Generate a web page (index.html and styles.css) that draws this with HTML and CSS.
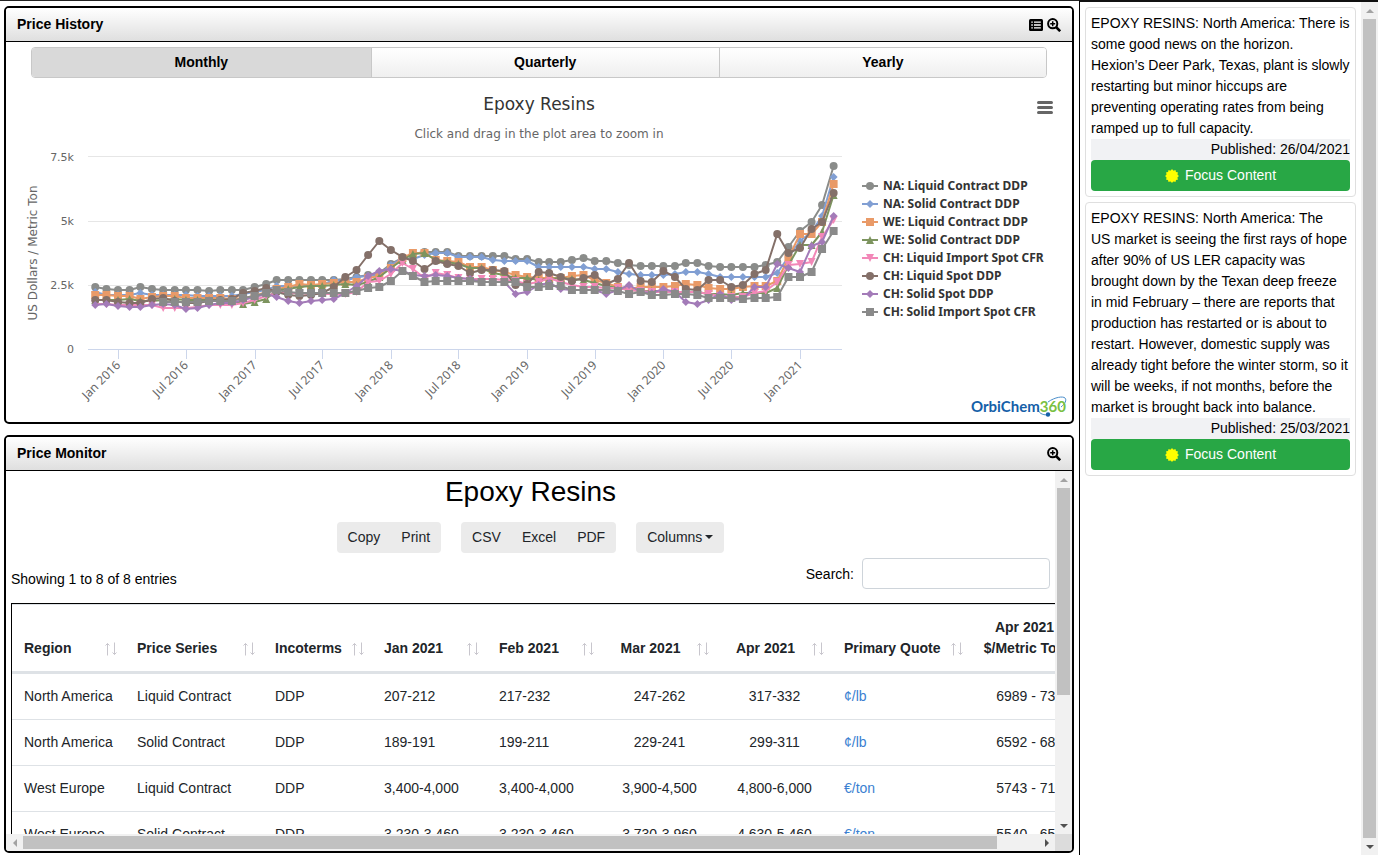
FILE: index.html
```html
<!DOCTYPE html>
<html lang="en">
<head>
<meta charset="utf-8">
<title>Epoxy Resins</title>
<link rel="stylesheet" href="styles.css">
</head>
<body>
<svg class="sprite" aria-hidden="true">
  <symbol id="i-zoom" viewBox="0 0 14 14"><circle cx="5.7" cy="5.7" r="4.6" fill="none" stroke="#000" stroke-width="2"/><path d="M9 9l4.2 4.2" stroke="#000" stroke-width="2.6"/><path d="M5.7 3.2v5M3.2 5.7h5" stroke="#000" stroke-width="1.5"/></symbol>
  <symbol id="i-list" viewBox="0 0 14 14"><rect y="1" width="14" height="12" rx="1.5"/><path d="M2.3 4.2h1.5M2.3 7h1.5M2.3 9.8h1.5M5 4.2h6.8M5 7h6.8M5 9.8h6.8" stroke="#fff" stroke-width="1.3"/></symbol>
  <symbol id="i-sort" viewBox="0 0 16 14"><path d="M4.500 13.500V1.500M2.500 3.500l2-2 2 2M11.500 .5v12M9.500 10.500l2 2 2-2" fill="none" stroke="#c8c6cd" stroke-width="1"/></symbol>
  <symbol id="i-burst" viewBox="-7 -7 14 14"><path fill="#ff0" d="M0-7 1.400-5.200 3.500-6.100 3.900-3.900 6.100-3.500 5.200-1.400 7 0 5.200 1.400 6.100 3.500 3.900 3.900 3.500 6.100 1.400 5.200 0 7-1.400 5.200-3.500 6.100-3.900 3.900-6.100 3.500-5.200 1.400-7 0-5.200-1.400-6.100-3.500-3.900-3.900-3.500-6.100-1.400-5.200z"/><circle r="5.600" fill="#ff0"/></symbol>
</svg>
<div class="page">
  <main class="main">
    <section class="panel">
      <header class="panel-head">
        <h2>Price History</h2>
        <button class="icon-btn" aria-label="Show data"><svg><use href="#i-list"/></svg></button>
        <button class="icon-btn" aria-label="Enlarge chart"><svg><use href="#i-zoom"/></svg></button>
      </header>
      <div class="tabs">
        <button class="tab active">Monthly</button>
        <button class="tab">Quarterly</button>
        <button class="tab">Yearly</button>
      </div>
      <svg class="chart" viewBox="6 78 1066 344" role="img" aria-label="Epoxy Resins price chart">
        <text class="c-title" x="539" y="110">Epoxy Resins</text>
        <text class="c-sub" x="539" y="138">Click and drag in the plot area to zoom in</text>
        <path d="M1038.500 102.500h13M1038.500 107.500h13M1038.500 112.500h13" stroke="#666" stroke-width="3" stroke-linecap="round"/>
        <path d="M88 156.500H842M88 221.500H842M88 285.500H842" stroke="#e6e6e6"/>
        <path d="M88 349.500H842" stroke="#ccd6eb"/>
        <g class="c-y"><text x="74" y="161">7.5k</text><text x="74" y="225">5k</text><text x="74" y="289">2.5k</text><text x="74" y="353">0</text></g>
        <text class="c-ytitle" transform="translate(37 253) rotate(-90)">US Dollars / Metric Ton</text>
        <g id="xaxis" class="c-x"></g>
        <g id="plot"></g>
        <g id="legend" class="c-legend"></g>
        <g class="logo">
          <path d="M1038 408c0 5 4 7 10 7M1048 402c7-5 15-6 17-4s0 6-4 9" fill="none" stroke="#4b8fcb"/>
          <text x="971" y="412">OrbiChem<tspan class="logo-num">360</tspan></text>
          <circle cx="1048" cy="414.500" r="2.200" fill="#1560a8"/>
        </g>
      </svg>
    </section>

    <section class="panel">
      <header class="panel-head">
        <h2>Price Monitor</h2>
        <button class="icon-btn" aria-label="Enlarge table"><svg><use href="#i-zoom"/></svg></button>
      </header>
      <div class="scroller">
        <div class="monitor">
          <h1>Epoxy Resins</h1>
          <div class="toolbar">
            <div class="group"><button>Copy</button><button>Print</button></div>
            <div class="group"><button>CSV</button><button>Excel</button><button>PDF</button></div>
            <div class="group"><button>Columns<span class="caret"></span></button></div>
          </div>
          <div class="filter">
            <p>Showing 1 to 8 of 8 entries</p>
            <label for="search">Search:</label>
            <input id="search" type="search">
          </div>
          <table>
            <colgroup><col class="w-region"><col class="w-series"><col class="w-inco"><col class="w-month"><col class="w-month"><col class="w-month"><col class="w-month"><col class="w-quote"><col class="w-usd"></colgroup>
            <thead><tr>
              <th><button><span>Region</span><svg><use href="#i-sort"/></svg></button></th>
              <th><button><span>Price Series</span><svg><use href="#i-sort"/></svg></button></th>
              <th><button><span>Incoterms</span><svg><use href="#i-sort"/></svg></button></th>
              <th><button><span>Jan 2021</span><svg><use href="#i-sort"/></svg></button></th>
              <th><button><span>Feb 2021</span><svg><use href="#i-sort"/></svg></button></th>
              <th class="mid"><button><span>Mar 2021</span><svg><use href="#i-sort"/></svg></button></th>
              <th class="mid"><button><span>Apr 2021</span><svg><use href="#i-sort"/></svg></button></th>
              <th><button><span>Primary Quote</span><svg><use href="#i-sort"/></svg></button></th>
              <th class="mid"><button><span>Apr 2021<br>$/Metric Ton</span><svg><use href="#i-sort"/></svg></button></th>
            </tr></thead>
            <tbody>
              <tr><td>North America</td><td>Liquid Contract</td><td>DDP</td><td>207-212</td><td>217-232</td><td class="mid">247-262</td><td class="mid">317-332</td><td><a href="#">¢/lb</a></td><td class="mid">6989 - 7319</td></tr>
              <tr><td>North America</td><td>Solid Contract</td><td>DDP</td><td>189-191</td><td>199-211</td><td class="mid">229-241</td><td class="mid">299-311</td><td><a href="#">¢/lb</a></td><td class="mid">6592 - 6856</td></tr>
              <tr><td>West Europe</td><td>Liquid Contract</td><td>DDP</td><td>3,400-4,000</td><td>3,400-4,000</td><td class="mid">3,900-4,500</td><td class="mid">4,800-6,000</td><td><a href="#">€/ton</a></td><td class="mid">5743 - 7179</td></tr>
              <tr><td>West Europe</td><td>Solid Contract</td><td>DDP</td><td>3,230-3,460</td><td>3,230-3,460</td><td class="mid">3,730-3,960</td><td class="mid">4,630-5,460</td><td><a href="#">€/ton</a></td><td class="mid">5540 - 6533</td></tr>
            </tbody>
          </table>
        </div>
        <div class="bar v"><i class="arrow up dim"></i><div class="track"><div class="thumb v-part"></div></div><i class="arrow down"></i></div>
        <div class="bar h"><i class="arrow left dim"></i><div class="track"><div class="thumb h-part"></div></div><i class="arrow right"></i></div>
        <div class="corner"></div>
      </div>
    </section>
  </main>

  <aside class="side">
    <div class="cards">
      <article class="card">
        <p>EPOXY RESINS: North America: There is some good news on the horizon. Hexion’s Deer Park, Texas, plant is slowly restarting but minor hiccups are preventing operating rates from being ramped up to full capacity.</p>
        <p class="date">Published: 26/04/2021</p>
        <button class="focus"><svg><use href="#i-burst"/></svg>Focus Content</button>
      </article>
      <article class="card">
        <p>EPOXY RESINS: North America: The US&nbsp;market is seeing the first rays of hope after 90% of US LER capacity was brought down by the Texan deep freeze in mid February – there are reports that production has restarted or is about to restart. However, domestic supply was already tight before the winter storm, so it will be weeks, if not months, before the market is brought back into balance.</p>
        <p class="date">Published: 25/03/2021</p>
        <button class="focus"><svg><use href="#i-burst"/></svg>Focus Content</button>
      </article>
    </div>
    <div class="bar v"><i class="arrow up dim"></i><div class="track"><div class="thumb full"></div></div><i class="arrow down"></i></div>
  </aside>
</div>
<script src="chart.js"></script>
</body>
</html>
```

FILE: styles.css
```css
* { box-sizing: border-box; margin: 0; padding: 0; }
body {
  font: 14px/21px "Liberation Sans", Arial, sans-serif;
  color: #000;
  background: #fff;
}
button { font: inherit; color: inherit; background: none; border: 0; }
.sprite { display: none; }

.page { display: grid; grid-template-columns: minmax(0, 1fr) 299px; height: 100vh; }
.main {
  display: flex;
  flex-direction: column;
  gap: 11px;
  min-height: 0;
  padding: 5px 5px 2px 4px;
  border-top: 1px solid #222;
}
.panel {
  flex: 1 1 0;
  min-height: 0;
  display: flex;
  flex-direction: column;
  border: 2px solid #000;
  border-radius: 5px;
  overflow: hidden;
}
.panel-head {
  flex: none;
  display: flex;
  align-items: center;
  gap: 4px;
  height: 34px;
  padding: 0 11px;
  background: linear-gradient(#fff, #dfdfdf);
  border-bottom: 1px solid #000;
}
.panel-head h2 { flex: 1; font-size: 14px; font-weight: bold; }
.icon-btn, .icon-btn svg { display: block; width: 14px; height: 14px; }

.tabs {
  flex: none;
  display: flex;
  height: 31px;
  margin: 5px 25px 0;
  border: 1px solid #c8c8c8;
  border-radius: 4px;
  overflow: hidden;
}
.tab { flex: 1 1 auto; font-weight: bold; background: linear-gradient(#fff, #efefef); }
.tab + .tab { border-left: 1px solid #c8c8c8; }
.tab.active { background: #d9d9d9; }

.chart { display: block; width: 100%; flex: 1 1 0; min-height: 0; }
.chart text { font-family: "DejaVu Sans", sans-serif; font-size: 12px; fill: #666; }
.chart .c-title { font-size: 17px; fill: #333; text-anchor: middle; }
.chart .c-sub, .chart .c-ytitle { text-anchor: middle; }
.chart .c-y text, .chart .c-x text { text-anchor: end; }
.chart .c-y text { font-size: 11px; }
.chart .c-x text { font-family: "Noto Sans", sans-serif; }
.chart .c-legend text { font-family: "Noto Sans", sans-serif; font-weight: bold; fill: #333; }
.chart .logo text { font-family: Lato, sans-serif; font-size: 15px; font-weight: bold; fill: #1560a8; }
.chart .logo .logo-num { fill: #7ac043; }

.scroller {
  flex: 1;
  min-height: 0;
  display: grid;
  grid-template: minmax(0, 1fr) 17px / minmax(0, 1fr) 17px;
}
.monitor { overflow: hidden; padding: 4px 5px 0; }
.monitor h1 { font-size: 28px; line-height: 34px; font-weight: normal; text-align: center; }
.toolbar { display: flex; justify-content: center; gap: 20px; margin-top: 13px; }
.group { display: flex; background: #ebebeb; border-radius: 4px; color: #212529; }
.group button { height: 31px; padding: 0 11px; }
.group button + button { margin-left: -1px; }
.caret {
  display: inline-block;
  margin-left: 3px;
  vertical-align: 3px;
  border: 4px solid transparent;
  border-top-color: #212529;
  border-bottom: 0;
}
.filter { display: flex; align-items: center; gap: 8px; margin: 4px 0 13px; }
.filter p { flex: 1; padding-top: 12px; }
.filter label { padding-top: 2px; }
.filter input { width: 188px; height: 31px; padding: 0 8px; border: 1px solid #ced4da; border-radius: 4px; }

table {
  table-layout: fixed;
  width: 1085px;
  border-spacing: 0;
  border: 1px solid #000;
  color: #212529;
}
.w-region { width: 113px; }
.w-series { width: 138px; }
.w-inco { width: 109px; }
.w-month { width: 115px; }
.w-quote { width: 139px; }
.w-usd { width: 125px; }
th { padding: 12px 6px 12px 12px; vertical-align: bottom; text-align: left; border-top: 1px solid #dee2e6; border-bottom: 3px solid #dee2e6; }
th button { display: flex; align-items: flex-end; gap: 8px; width: 100%; text-align: left; font-weight: bold; white-space: nowrap; }
th span { flex: 1; }
th svg { flex: none; width: 16px; height: 14px; margin-bottom: 3px; }
td { height: 46px; padding: 0 12px; border-bottom: 1px solid #dee2e6; white-space: nowrap; }
.mid, .mid button { text-align: center; }
td a { color: #3b7fd1; text-decoration: none; }

.bar { display: flex; background: #f1f1f1; }
.bar.v { flex-direction: column; width: 17px; }
.track { flex: 1; display: flex; min-height: 0; }
.bar.v .track { flex-direction: column; padding: 0 2px; }
.bar.h .track { padding: 2px 0; }
.thumb { background: #c1c1c1; }
.v-part { height: 63%; }
.h-part { width: 96%; }
.full { height: 100%; }
.corner { background: #dcdcdc; }
.arrow { flex: none; display: grid; place-items: center; width: 17px; height: 17px; color: #505050; }
.arrow.dim { color: #a3a3a3; }
.arrow::before { content: ""; border: 4px solid transparent; }
.up::before { border-top: 0; border-bottom-color: currentColor; }
.down::before { border-bottom: 0; border-top-color: currentColor; }
.left::before { border-left: 0; border-right-color: currentColor; }
.right::before { border-right: 0; border-left-color: currentColor; }

.side { display: flex; min-height: 0; border-left: 1px solid #000; border-top: 2px solid #111; }
.cards { flex: 1; min-width: 0; display: flex; flex-direction: column; gap: 5px; padding: 5px; overflow: hidden; }
.card { padding: 5px; border: 1px solid #dfdfdf; border-radius: 4px; }
.date { text-align: right; background: #f1f2f4; }
.focus {
  display: flex;
  align-items: center;
  justify-content: center;
  gap: 6px;
  width: 100%;
  height: 31px;
  color: #fff;
  background: #28a745;
  border-radius: 4px;
}
.focus svg { width: 14px; height: 14px; }
```

FILE: chart.js
```js
// Vertical plot positions per month, November 2015 to April 2021.
const series = [
  { name: "NA: Liquid Contract DDP", color: "#8a8c8a", shape: "circle", y: [287,289,290,290,287,289,290,290,290,290,291,290,290,290,287,284,280,280,280,280,280,280,279,277,275,273,264,258,254,252,252,252,256,256,256,256,256,259,259,262,262,262,260,258,261,261,263,265,266,266,266,266,263,263,266,267,267,267,267,265,262,247,231,222,205,166] },
  { name: "NA: Solid Contract DDP", color: "#819fd3", shape: "diamond", y: [292,295,295,295,293,295,295,295,295,296,296,296,296,294,292,290,286,286,286,286,285,280,281,277,276,275,265,258,259,255,253,253,257,257,257,260,261,261,261,267,267,267,267,267,269,269,272,274,275,275,275,274,272,272,274,277,277,277,277,277,273,257,241,232,216,177] },
  { name: "WE: Liquid Contract DDP", color: "#e99a68", shape: "square", y: [295,295,296,296,299,297,296,296,298,298,298,298,299,298,296,292,289,287,284,285,284,283,282,282,278,276,268,258,253,253,260,261,262,267,267,270,272,275,277,278,278,278,276,275,280,283,287,289,287,287,287,286,284,285,288,289,289,287,286,286,281,258,234,234,222,184] },
  { name: "WE: Solid Contract DDP", color: "#7d945f", shape: "triangle", y: [300,300,300,299,301,301,300,299,300,300,300,300,301,304,302,299,290,289,287,286,286,285,284,285,282,277,268,260,254,253,260,262,264,268,268,273,275,278,278,280,279,278,279,280,283,286,288,290,291,291,291,292,292,292,294,294,295,293,293,293,288,265,245,245,232,195] },
  { name: "CH: Liquid Import Spot CFR", color: "#f288b8", shape: "down", y: [304,304,305,305,305,305,308,308,308,307,305,305,305,303,300,296,293,293,293,294,294,294,294,292,282,281,274,263,269,278,273,275,278,279,279,279,280,281,284,282,278,282,285,287,287,288,288,290,291,292,292,292,292,292,294,296,297,297,293,291,282,265,264,262,237,220] },
  { name: "CH: Liquid Spot DDP", color: "#847069", shape: "circle", y: [300,300,302,303,303,299,298,301,303,303,301,300,299,293,291,288,292,295,296,295,293,287,277,270,255,241,250,257,261,269,261,264,266,273,270,270,271,285,284,272,273,277,281,278,275,284,279,263,281,282,271,277,289,290,280,280,287,285,274,270,234,253,248,229,222,193] },
  { name: "CH: Solid Spot DDP", color: "#a37bb8", shape: "diamond", y: [305,304,306,307,307,305,304,305,309,308,305,303,303,300,297,294,297,301,303,301,300,299,293,286,276,271,269,271,275,276,275,276,278,279,282,282,282,294,292,285,283,289,290,290,290,294,290,285,292,293,289,292,302,304,300,294,300,299,287,287,264,268,272,246,242,216] },
  { name: "CH: Solid Import Spot CFR", color: "#8a8a8a", shape: "square", from: 6, y: [302,302,302,302,301,301,301,298,296,293,290,292,293,293,293,293,293,291,288,287,281,271,276,282,281,281,281,281,282,282,282,282,287,287,286,286,290,290,290,290,291,294,292,295,295,294,294,295,298,298,298,299,298,298,297,277,277,272,249,231] }
];

const NS = "http://www.w3.org/2000/svg";
const add = (parent, tag, attrs, text) => {
  const el = document.createElementNS(NS, tag);
  for (const key in attrs) el.setAttribute(key, attrs[key]);
  if (text) el.textContent = text;
  parent.appendChild(el);
  return el;
};

const DAY = 86400000;
const monthX = n => 118 + (Date.UTC(2016, n, 1) - Date.UTC(2016, 0, 1)) / DAY * 0.3733;

const shapes = {
  circle: "M-4 0a4 4 0 1 0 8 0a4 4 0 1 0-8 0z",
  diamond: "M0-4L4 0 0 4-4 0z",
  square: "M-4-4H4V4H-4z",
  triangle: "M0-4L4 4H-4z",
  down: "M-4-4H4L0 4z"
};

const xaxis = document.getElementById("xaxis");
for (let n = 0; n <= 60; n += 6) {
  const x = monthX(n);
  add(xaxis, "path", { d: `M${Math.round(x) + 0.5} 350v9`, stroke: "#ccd6eb" });
  const label = (n % 12 ? "Jul " : "Jan ") + (2016 + Math.floor(n / 12));
  add(xaxis, "text", { transform: `translate(${x + 3} 366) rotate(-45)` }, label);
}

const plot = document.getElementById("plot");
const legend = document.getElementById("legend");
series.forEach((s, row) => {
  const pts = s.y.map((y, i) => [monthX(i + (s.from || 0) - 2), y]);
  add(plot, "polyline", { points: pts.join(" "), fill: "none", stroke: s.color, "stroke-width": 2, "stroke-linejoin": "round" });
  pts.forEach(([x, y]) => add(plot, "path", { d: shapes[s.shape], transform: `translate(${x} ${y})`, fill: s.color }));
  const ly = 186 + row * 18;
  add(legend, "path", { d: `M862 ${ly}h16`, stroke: s.color, "stroke-width": 2 });
  add(legend, "path", { d: shapes[s.shape], transform: `translate(870 ${ly})`, fill: s.color });
  add(legend, "text", { x: 883, y: ly + 4 }, s.name);
});
```
